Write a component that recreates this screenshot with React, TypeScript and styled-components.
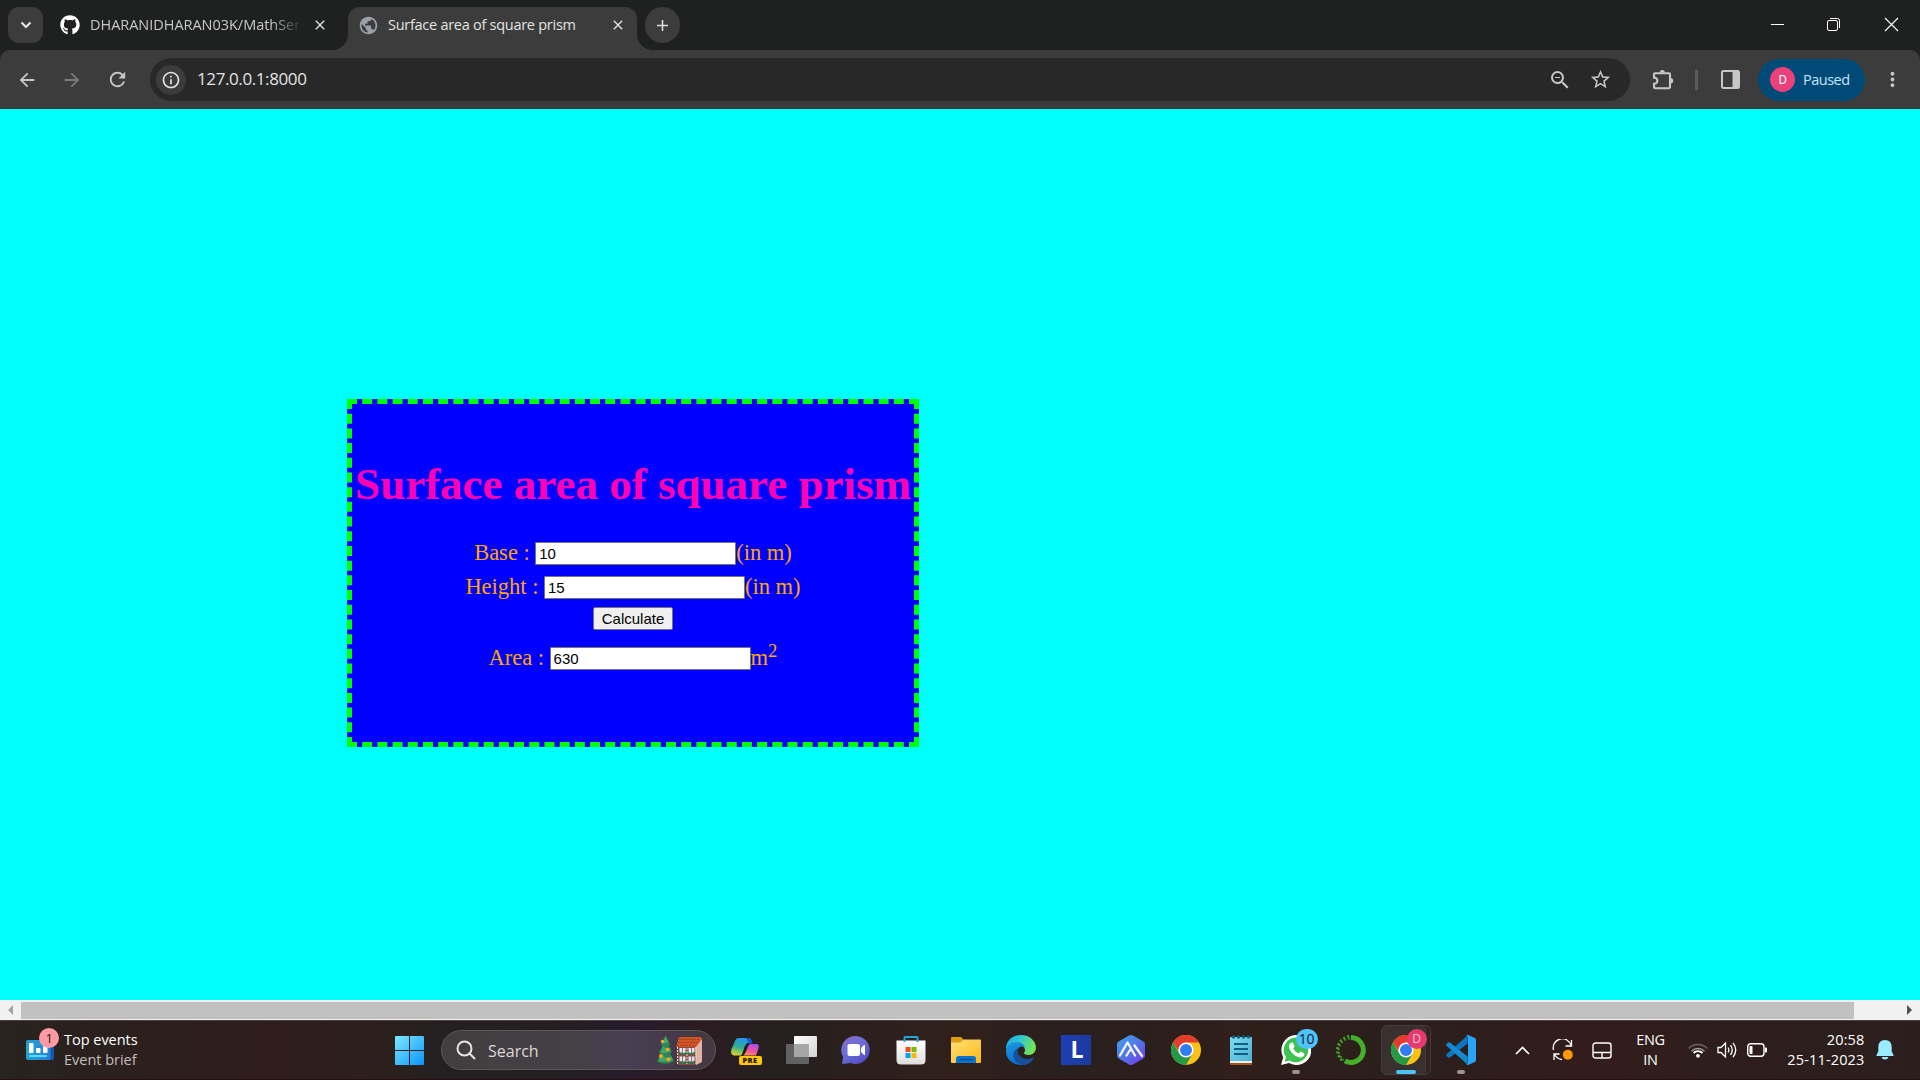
import React from "react";
import styled, { createGlobalStyle } from "styled-components";
import { MdArrowBack, MdArrowForward, MdRefresh, MdInfoOutline, MdStarBorder, MdMoreVert, MdClose, MdAdd, MdZoomOut, MdPublic } from "react-icons/md";
import { FaGithub } from "react-icons/fa";

const ui = `"Open Sans", "Noto Sans", sans-serif`;

const Global = createGlobalStyle`
  html, body { margin: 0; padding: 0; overflow: hidden; }
  * { box-sizing: border-box; }
`;

const Screen = styled.div`
  width: 1920px;
  height: 1080px;
  display: flex;
  flex-direction: column;
  overflow: hidden;
  background: #202222;
  font-family: ${ui};
`;

/* ---------- browser chrome ---------- */

const TabStrip = styled.div`
  height: 50px;
  flex: none;
  display: flex;
  background: #1f2121;
  padding: 7px 0 0 8px;
`;

const RoundButton = styled.div<{ $radius: number }>`
  width: 35px;
  height: 36px;
  border-radius: ${(p) => p.$radius}px;
  background: #3c3c3c;
  color: #dedede;
  display: flex;
  align-items: center;
  justify-content: center;
`;

const Tab = styled.div<{ $active?: boolean }>`
  position: relative;
  display: flex;
  align-items: center;
  height: 43px;
  padding-bottom: 7px;
  width: ${(p) => (p.$active ? 289 : 288)}px;
  padding-left: ${(p) => (p.$active ? 10 : 0)}px;
  padding-right: ${(p) => (p.$active ? 11 : 20)}px;
  margin-left: ${(p) => (p.$active ? 0 : 17)}px;
  border-radius: 12px 12px 0 0;
  background: ${(p) => (p.$active ? "#3c3c3c" : "transparent")};
  color: ${(p) => (p.$active ? "#e3e3e3" : "#c7c7c7")};
  ${(p) =>
    p.$active &&
    `
  &::before, &::after {
    content: "";
    position: absolute;
    bottom: 0;
    width: 15px;
    height: 15px;
  }
  &::before { left: -15px; background: radial-gradient(circle at 0 0, transparent 14.5px, #3c3c3c 15px); }
  &::after { right: -15px; background: radial-gradient(circle at 100% 0, transparent 14.5px, #3c3c3c 15px); }
  `}
`;

const TabTitle = styled.div<{ $gap: number; $spacing: number; $fade?: boolean }>`
  margin-left: ${(p) => p.$gap}px;
  font-size: 14.5px;
  line-height: 22px;
  letter-spacing: ${(p) => p.$spacing}px;
  white-space: nowrap;
  ${(p) => p.$fade && "mask-image: linear-gradient(90deg, #000 86%, rgba(0, 0, 0, 0.1) 100%);"}
`;

const TabClose = styled.div`
  display: flex;
  margin-left: auto;
  color: #e3e3e3;
`;

const NewTab = styled(RoundButton)`
  margin-left: 8px;
`;

const WindowControls = styled.div`
  margin-left: auto;
  margin-top: 10px;
  margin-right: 21px;
  display: flex;
  gap: 42px;
  svg { display: block; }
`;

const Toolbar = styled.div`
  height: 59px;
  flex: none;
  display: flex;
  align-items: center;
  background: #3c3c3c;
  border-radius: 10px 10px 0 0;
  color: #c7c7c7;
`;

const NavButtons = styled.div`
  width: 150px;
  padding-left: 16px;
  display: flex;
  align-items: center;
  gap: 23px;
  svg { display: block; }
`;

const Muted = styled.span`
  color: #7b7b7b;
  display: flex;
`;

const Omnibox = styled.div`
  width: 1480px;
  height: 43px;
  border-radius: 22px;
  background: #282828;
  display: flex;
  align-items: center;
  padding: 0 18px 0 6px;
`;

const InfoBadge = styled.div`
  width: 30px;
  height: 30px;
  border-radius: 50%;
  background: #3c3c3c;
  color: #e3e3e3;
  display: flex;
  align-items: center;
  justify-content: center;
`;

const Address = styled.div`
  margin-left: 11px;
  flex: 1;
  font-size: 17px;
  line-height: 22px;
  padding-bottom: 1px;
  letter-spacing: -0.4px;
  color: #e3e3e3;
`;

const OmniIcons = styled.div`
  display: flex;
  gap: 17px;
`;

const ToolIcons = styled.div`
  display: flex;
  align-items: center;
  padding-left: 22px;
  flex: 1;
`;

const Divider = styled.div`
  width: 3px;
  height: 20px;
  background: #5c5c5c;
  margin: 0 23px 0 21px;
`;

const ProfilePill = styled.div`
  width: 107px;
  height: 42px;
  border-radius: 21px;
  background: #004a77;
  color: #c2e7ff;
  display: flex;
  align-items: center;
  padding: 0 0 1px 12px;
  gap: 8px;
  margin-left: 18px;
  margin-right: 16px;
  font-size: 14.5px;
  letter-spacing: -0.5px;
`;

const Avatar = styled.div`
  width: 25px;
  height: 25px;
  border-radius: 50%;
  background: #ec407a;
  color: #fff;
  font: 13px/25px Roboto, sans-serif;
  text-align: center;
`;

/* ---------- page ---------- */

const Page = styled.main`
  height: 891px;
  flex: none;
  background: #00ffff;
  padding: 290px 0 0 347px;
`;

const Box = styled.section`
  width: 572px;
  height: 348px;
  border: 5px dashed #00ff00;
  background: #0000ff;
  display: flex;
  flex-direction: column;
  align-items: center;
  font-family: "Liberation Serif", "Times New Roman", serif;
  font-size: 22.5px;
  color: orange;
  white-space: nowrap;
`;

const Heading = styled.h1`
  margin: 53px 0 0;
  height: 54px;
  line-height: 54px;
  font-size: 45px;
  color: #ff00b4;
`;

const Row = styled.div<{ $top: number }>`
  height: 28px;
  line-height: 28px;
  margin-top: ${(p) => p.$top}px;
  display: flex;
  align-items: center;
`;

const Label = styled.label`
  margin-right: 5.5px;
`;

const Field = styled.input`
  width: 201px;
  height: 23px;
  margin: 1px 0 0;
  padding: 2px 3px;
  border: 1px solid #767676;
  border-radius: 1px;
  background: #fff;
  color: #000;
  font: 15px/17px "Liberation Sans", Arial, sans-serif;
  outline: none;
`;

const Power = styled.sup`
  font-size: 18.75px;
  line-height: 0;
  vertical-align: super;
`;

const Submit = styled.button`
  width: 80px;
  height: 23px;
  margin: 6px 0 0;
  padding: 0;
  border: 1px solid #767676;
  border-radius: 2px;
  background: #efefef;
  color: #000;
  font: 15px/19px "Liberation Sans", Arial, sans-serif;
`;

const Scrollbar = styled.div`
  height: 20px;
  flex: none;
  background: #f1f1f1;
  display: flex;
  align-items: center;
  padding: 0 8px;
`;

const Thumb = styled.div`
  width: 1833px;
  height: 17px;
  background: #c1c1c1;
  margin: 1px 53px 0 8px;
`;

/* ---------- taskbar ---------- */

const Taskbar = styled.footer`
  height: 60px;
  flex: none;
  display: flex;
  align-items: center;
  border-top: 1px solid #49403f;
  border-bottom: 1px solid #261015;
  background: linear-gradient(90deg, #28231f 0, #2b201d 130px, #301e1c 270px, #2c201d 380px, #242021 450px, #251f22 560px, #281b2c 630px, #2b1c22 700px, #25201f 770px, #2b201d 860px, #31201a 950px, #29201f 1060px, #2b1f1c 1150px, #301f1b 1230px, #2a1f1c 1400px, #331c1c 1600px, #2e1e1c 1700px, #2b1f1e 1920px);
  color: #fff;
`;

const Widgets = styled.div`
  width: 381.5px;
  display: flex;
  align-items: center;
  padding-left: 26px;
`;

const Badged = styled.div`
  position: relative;
  display: flex;
  width: 28px;
`;

const Badge = styled.div<{ $bg: string; $x: number; $y: number; $w?: number; $color?: string; $size?: number }>`
  position: absolute;
  left: ${(p) => p.$x}px;
  top: ${(p) => p.$y}px;
  width: ${(p) => p.$w ?? 20}px;
  height: 20px;
  border-radius: 10px;
  background: ${(p) => p.$bg};
  color: ${(p) => p.$color ?? "#1c1c1c"};
  font-size: ${(p) => p.$size ?? 13}px;
  line-height: 20px;
  text-align: center;
  letter-spacing: -0.3px;
`;

const WidgetText = styled.div`
  margin-left: 10px;
  font-size: 14.5px;
  line-height: 20px;
  letter-spacing: -0.02px;
`;

const Soft = styled.div`
  color: #c4bfbd;
`;

const Cell = styled.div`
  position: relative;
  width: 55px;
  height: 50px;
  display: flex;
  align-items: center;
  justify-content: center;
  flex: none;
  svg { display: block; }
`;

const ActivePlate = styled.div<{ $back?: boolean }>`
  position: absolute;
  left: ${(p) => (p.$back ? 9 : 2)}px;
  top: 0;
  width: ${(p) => (p.$back ? 43 : 45)}px;
  height: 50px;
  border: 1px solid #473c3a;
  border-radius: 6px;
  background: ${(p) => (p.$back ? "#2e2522" : "#393130")};
`;

const Layer = styled.div`
  position: relative;
`;

const Indicator = styled.div<{ $active?: boolean }>`
  position: absolute;
  bottom: 1px;
  left: ${(p) => (p.$active ? 17 : 23)}px;
  width: ${(p) => (p.$active ? 20 : 8)}px;
  height: 4px;
  border-radius: 2px;
  background: ${(p) => (p.$active ? "#4cc2ff" : "#9c9492")};
`;

const Search = styled.div`
  width: 275px;
  height: 40px;
  margin: 0 2.5px 0 4.5px;
  border-radius: 20px;
  border: 1px solid #5c5758;
  background: linear-gradient(90deg, #423e3f, #454046 50%, #483f52 68%, #46394a 85%, #443a40);
  display: flex;
  align-items: center;
  padding: 0 12px 0 14px;
  flex: none;
`;

const SearchLabel = styled.span`
  margin-left: 12px;
  padding-top: 1px;
  flex: 1;
  font-size: 16px;
  letter-spacing: 0;
  color: #dcd9da;
`;

const LApp = styled.div`
  width: 30px;
  height: 30px;
  background: linear-gradient(100deg, #1d3fb4, #1c3a9e);
  color: #fff;
  font: bold 23px/28px "Open Sans", sans-serif;
  text-align: center;
  text-indent: 2px;
`;

const Pre = styled.div`
  position: absolute;
  left: 20px;
  top: 31px;
  width: 23px;
  height: 9px;
  border-radius: 2px;
  background: #ffc60a;
  color: #1b1200;
  font: 800 7.5px/9px "Open Sans", sans-serif;
  text-align: center;
  letter-spacing: 0.4px;
`;

const Tray = styled.div`
  flex: 1;
  display: flex;
  align-items: center;
  padding-left: 26.5px;
  svg { display: block; flex: none; }
`;

const Cycle = styled.svg`
  margin-left: 21.5px;
`;

const Touchpad = styled.svg`
  margin-left: 18px;
`;

const Language = styled.div`
  width: 34px;
  margin-left: 22px;
  text-align: center;
  font-size: 14.5px;
  line-height: 20px;
  letter-spacing: -0.3px;
`;

const Status = styled.div`
  display: flex;
  align-items: center;
  margin-left: 20px;
  gap: 9px;
`;

const Clock = styled.div`
  width: 92px;
  margin-left: 6px;
  margin-right: 11px;
  text-align: right;
  font-size: 14.5px;
  line-height: 20px;
  letter-spacing: 0.15px;
  white-space: nowrap;
`;

const Puzzle = () => (
  <svg width="22" height="22" viewBox="0 0 22 22" fill="none">
    <path d="M4 4.200H17a1 1 0 0 1 1 1V18a1.200 1.200 0 0 1-1.200 1.200H3.200A1.200 1.200 0 0 1 2 18v-3.200c2 0 3.400-1.200 3.400-3.100S4 8.600 2 8.600V5.200a1 1 0 0 1 1-1z" stroke="#c7c7c7" strokeWidth="2.100" />
    <path d="M7.700 3.500a2.600 2.600 0 0 1 5.200 0zM18.500 9a2.700 2.700 0 0 1 0 5.400z" fill="#c7c7c7" />
  </svg>
);

const ChromeLogo = () => (
  <svg width="30" height="30" viewBox="0 0 30 30">
    <circle cx="15" cy="15" r="15" fill="#fbc116" />
    <path d="M2 7.500A15 15 0 0 1 28 7.500H15L9 18z" fill="#e33b2e" />
    <path d="M2 7.500A15 15 0 0 0 15 30l6.500-11.200H8.500z" fill="#269947" />
    <circle cx="15" cy="15" r="7.600" fill="#fff" />
    <circle cx="15" cy="15" r="6" fill="#2f7df1" />
  </svg>
);

const Windows = () => (
  <svg width="29" height="29" viewBox="0 0 29 29">
    <defs>
      <linearGradient id="win" x1="0" y1="0" x2="1" y2="1"><stop stopColor="#7eeaff" /><stop offset="1" stopColor="#0a94fb" /></linearGradient>
    </defs>
    <path d="M1 0h13v14H0V1a1 1 0 0 1 1-1zM15 0h13a1 1 0 0 1 1 1v13H15zM0 15h14v14H1a1 1 0 0 1-1-1zM15 15h14v13a1 1 0 0 1-1 1H15z" fill="url(#win)" />
  </svg>
);

const Holiday = () => (
  <svg width="46" height="30" viewBox="0 0 46 30">
    <path d="M8.500 1l5 9-2 .5 3.500 7-2 .7 4 8.300q-8.500 4.500-17 0L4 18.200l-2-.7 3.500-7-2-.5z" fill="#2c8754" />
    <path d="M8.500 1l3 5.500q-3 3-6 1.500zM6 11q3 3 7 1.500L14 16q-6 3-11 2zM3 20q6 4 11.500 1.500L16 25q-8 3-14.500 1z" fill="#45a566" />
    <g fill="#f3a91d"><circle cx="5.500" cy="6.500" r="1.700" /><circle cx="10.500" cy="14.500" r="1.800" /><circle cx="4" cy="21" r="2" /><circle cx="11.500" cy="24.500" r="2" /></g>
    <path d="M21 10h18v20H21z" fill="#8d4b43" />
    <path d="M38 12l6-9 1 2v22l-6 3z" fill="#e2b3a5" />
    <path d="M22 2h22l1 2-6 8H19z" fill="#cf5529" />
    <path d="M22 4.500h20M21 7.500h20M20 10.500h19" stroke="#a93e1f" strokeWidth="1" strokeDasharray="2 1" />
    <path d="M22.500 13h6v5h-6zM31.500 13h6v5h-6zM22.500 21.500h6v5h-6zM31.500 21.500h6v5h-6z" fill="#dbe7f4" />
    <path d="M25.500 13v14M34.500 13v14" stroke="#8d4b43" strokeWidth=".8" />
    <path d="M22 17.500q4 3 8 0 4 3 8 0M22 26.500q4 3 8 0 4 3 8 0" stroke="#2c7a4b" strokeWidth="1.800" fill="none" />
    <path d="M20.500 12v18M30 13v16M39 12v18" stroke="#efd4cc" strokeWidth="1" strokeDasharray="2 1" />
  </svg>
);

const Copilot = () => (
  <svg width="30" height="30" viewBox="0 0 30 30">
    <defs>
      <linearGradient id="cpa" x1=".5" y1="0" x2=".2" y2="1"><stop stopColor="#2397ee" /><stop offset=".5" stopColor="#2eab97" /><stop offset="1" stopColor="#e1d626" /></linearGradient>
      <linearGradient id="cpb" x1=".6" y1="0" x2=".3" y2="1"><stop stopColor="#a64df0" /><stop offset=".6" stopColor="#f3549b" /><stop offset="1" stopColor="#f99257" /></linearGradient>
    </defs>
    <path d="M7 3h11q2 0 3 5h-5l-2 3q-2 8-4 9.500H3q-4-.5-2.500-6.500L4 6q1-3 3-3z" fill="url(#cpa)" />
    <path d="M14.500 3H18q2.500 0 3.500 5.500h-4Q16.500 4 14.500 3z" fill="#1658d4" />
    <path d="M20 9h5.500q3 0 2 4.500L25 20.500H12q2-1 3-4l2.500-6Q18 9 20 9z" fill="url(#cpb)" />
    <path d="M14.500 11.500L11.500 20.500" stroke="#241f20" strokeWidth="1.500" />
  </svg>
);

const TaskView = () => (
  <svg width="31" height="29" viewBox="0 0 31 29">
    <defs><linearGradient id="tv" x1="0" y1="0" x2="1" y2="1"><stop stopColor="#fff" /><stop offset="1" stopColor="#d2d2d2" /></linearGradient></defs>
    <rect x="8" y="0" width="23" height="21" rx="1" fill="url(#tv)" />
    <rect x="0" y="8" width="23" height="20" rx="1" fill="#626262" />
    <path d="M8 8h15v13H8z" fill="#a6a6a6" />
  </svg>
);

const Chat = () => (
  <svg width="30" height="30" viewBox="0 0 30 30">
    <defs><linearGradient id="chat" x1="0" y1="0" x2=".8" y2="1"><stop stopColor="#9168bf" /><stop offset=".45" stopColor="#6d6fd8" /><stop offset="1" stopColor="#514bc2" /></linearGradient></defs>
    <path d="M15 1a14 14 0 1 1-5.500 27L2 29q-1 0-.8-1l1-6A14 14 0 0 1 15 1z" fill="url(#chat)" />
    <rect x="6.500" y="9" width="12.500" height="12" rx="2" fill="#fff" />
    <path d="M20 13l3-3q1-.7 1 .5v9q0 1.200-1 .5l-3-3z" fill="#fff" />
  </svg>
);

const Store = () => (
  <svg width="30" height="30" viewBox="0 0 30 30">
    <defs><linearGradient id="store" x1="0" y1="0" x2="0" y2="1"><stop stopColor="#fff" /><stop offset="1" stopColor="#dedede" /></linearGradient></defs>
    <path d="M.500 5.500h29V25q0 4.500-4.500 4.500H5Q.5 29.500.5 25z" fill="url(#store)" />
    <path d="M8.500 7V2.500q0-.5.500-.5h12q.5 0 .5.5V7" fill="none" stroke="#1da7dd" strokeWidth="2" />
    <path d="M9.500 12h5v5h-5z" fill="#f04f22" /><path d="M15.500 12h5v5h-5z" fill="#7eb900" /><path d="M9.500 18h5v5h-5z" fill="#02a3ee" /><path d="M15.500 18h5v5h-5z" fill="#feb800" />
  </svg>
);

const Folder = () => (
  <svg width="30" height="28" viewBox="0 0 30 28">
    <defs><linearGradient id="fold" x1="0" y1="0" x2="1" y2="1"><stop stopColor="#ffe07a" /><stop offset="1" stopColor="#fdb913" /></linearGradient></defs>
    <path d="M0 2q0-1 1-1h9l3 3v6H0z" fill="#e09b12" />
    <path d="M0 6.500h9l4-3h16q1 0 1 1V26q0 1-1 1H1q-1 0-1-1z" fill="url(#fold)" />
    <path d="M5 27v-4.500Q5 20 7.500 20h15q2.500 0 2.500 2.500V27z" fill="#0c74d0" />
    <path d="M8.500 23.500h13" stroke="#064a8f" strokeWidth="1.500" />
  </svg>
);

const Edge = () => (
  <svg width="30" height="30" viewBox="0 0 30 30">
    <defs>
      <linearGradient id="ea" x1="0" y1="0" x2="1" y2=".3"><stop stopColor="#1ba7ea" /><stop offset=".5" stopColor="#31c8d0" /><stop offset="1" stopColor="#71e356" /></linearGradient>
      <linearGradient id="eb" x1="0" y1="0" x2=".5" y2="1"><stop stopColor="#1a9be5" /><stop offset="1" stopColor="#0a69cb" /></linearGradient>
    </defs>
    <path d="M0 14C0 5 7 0 15 0c9 0 15 6.500 15 12.500 0 5-4 7.500-7.500 7.500-3 0-4.500-1-4.500-2 0-.7 1-1.200 1-3 0-2.500-3-5.500-7.500-5.500C6 9.500 0 14 0 14z" fill="url(#ea)" />
    <path d="M0 15c1-5 5-8 10.500-8C16 7 19 11 19 13c-1.500-2-5-2-7 1-2.500 4-.5 10 5 12 4 1.500 8 0 9.500-1C24 28.500 20 30 15 30 6 30-1 23 0 15z" fill="url(#eb)" />
    <path d="M12 13c-4 2-5.500 6-4 10 1.200 4 5 6.500 8 7 5 0 9-2.500 11.500-6.500.6-1-.2-1.300-1-.8C22 25 17 24 14 21c-2.500-2.500-3-5.500-2-8z" fill="#174f9b" />
  </svg>
);

const HexApp = () => (
  <svg width="28" height="30" viewBox="0 0 28 30">
    <defs><linearGradient id="hex" x1="0" y1="0" x2=".9" y2="1"><stop stopColor="#41a5ed" /><stop offset=".5" stopColor="#5079e6" /><stop offset="1" stopColor="#7339ee" /></linearGradient></defs>
    <path d="M14 0q1 0 2 .6l10 5.700q2 1.200 2 3v11.400q0 1.800-2 3l-10 5.700q-2 1.100-4 0L2 23.700q-2-1.200-2-3V9.300q0-1.800 2-3L12 .6Q13 0 14 0z" fill="url(#hex)" />
    <path d="M3 20.500l7.500-13 7.500 13M9.500 20.500L14 13.500M17.500 10.500l7.500 10.500" stroke="#f3f4ff" strokeWidth="2.300" fill="none" strokeLinecap="round" strokeLinejoin="round" />
  </svg>
);

const Notepad = () => (
  <svg width="22" height="30" viewBox="0 0 22 30">
    <defs><linearGradient id="note" x1="0" y1="0" x2="1" y2="1"><stop stopColor="#7fdcf0" /><stop offset="1" stopColor="#49b1d3" /></linearGradient></defs>
    <path d="M0 25h22v4q0 1-1 1H1q-1 0-1-1z" fill="#a65214" />
    <path d="M0 24h22v4H0z" fill="#eee" />
    <path d="M0 3q0-1 1-1h20q1 0 1 1v23H0z" fill="url(#note)" />
    <path d="M4 9h14M4 14h14M4 19h14" stroke="#0f5f80" strokeWidth="1.800" />
    <g fill="#12607a"><circle cx="3.500" cy="2" r="1.700" /><circle cx="8.500" cy="2" r="1.700" /><circle cx="13.500" cy="2" r="1.700" /><circle cx="18.500" cy="2" r="1.700" /></g>
  </svg>
);

const WhatsApp = () => (
  <svg width="30" height="30" viewBox="0 0 30 30">
    <path d="M15 0a15 15 0 1 1-7 28L0 30l2.200-7.800A15 15 0 0 1 15 0z" fill="#fff" />
    <path d="M15 2.600a12.300 12.300 0 1 1-6.300 22.900L3.700 26.800 5 22A12.300 12.300 0 0 1 15 2.600z" fill="#3cc351" />
    <path d="M10.500 7.500l1.500.2 1.600 3.800-1.400 2c1.200 2.300 3 4 5.400 5l2-2 3.600 1.800c.5 3-2 4.200-4 4.200C14 22 8 16 8 11.500c0-2 1.200-3.500 2.500-4z" fill="#fff" />
  </svg>
);

const Ring = () => (
  <svg width="30" height="30" viewBox="0 0 30 30" fill="none">
    <path d="M15 2.600a12.400 12.400 0 1 1-6 23.300" stroke="#43b02a" strokeWidth="5" />
    <path d="M14 3.500A11.700 11.700 0 0 0 8 25" stroke="#3a9a28" strokeWidth="2" strokeDasharray="2 2" />
    <path d="M13 1.200A14 14 0 0 0 6.500 26" stroke="#43b02a" strokeWidth="2.300" strokeDasharray="2 2.200" />
  </svg>
);

const VsCode = () => (
  <svg width="30" height="30" viewBox="0 0 30 30">
    <path d="M22 0l-.5 8.500L4 22.500q-1 .7-1.900 0L.5 21q-.8-1 0-1.800z" fill="#0b76bf" />
    <path d="M22 30l-.5-8.500L4 7.500q-1-.7-1.900 0L.5 9q-.8 1 0 1.800z" fill="#1389d1" />
    <path d="M22 0l6.900 3q1.100.6 1.100 1.900v20.200q0 1.300-1.100 1.900L22 30q-1.300.4-2-.5 1.500.5 2-1V2q-.5-2-2-1.500 1-.900 2-.5z" fill="#28a5f2" />
  </svg>
);

const News = () => (
  <svg width="28" height="20" viewBox="0 0 28 20">
    <defs><linearGradient id="news" x1="0" x2="1"><stop stopColor="#24a4d0" /><stop offset="1" stopColor="#2a7ed8" /></linearGradient></defs>
    <rect x="8" width="20" height="20" rx="2" fill="#0d5aa8" />
    <rect width="24.500" height="20" rx="2" fill="url(#news)" />
    <rect x="3" y="3" width="4.500" height="10" rx="1" fill="#fff" /><rect x="10" y="8" width="4.500" height="5" rx="1" fill="#fff" /><rect x="17" y="6" width="4.500" height="7" rx="1" fill="#fff" />
    <rect x="3" y="15" width="18" height="2" rx="1" fill="#55dbff" />
  </svg>
);

const App = () => (
  <Screen>
    <Global />
    <TabStrip>
      <RoundButton $radius={11}>
        <svg width="12" height="8" fill="none" stroke="#e3e3e3" strokeWidth="2.200"><path d="M1.500 1.500L6 6l4.500-4.500" /></svg>
      </RoundButton>
      <Tab>
        <FaGithub size={20} color="#fff" />
        <TabTitle $gap={10} $spacing={-0.03} $fade>DHARANIDHARAN03K/MathSer</TabTitle>
        <TabClose><MdClose size={16} /></TabClose>
      </Tab>
      <Tab $active>
        <MdPublic size={21} color="#9aa0a6" />
        <TabTitle $gap={9} $spacing={-0.27}>Surface area of square prism</TabTitle>
        <TabClose><MdClose size={16} /></TabClose>
      </Tab>
      <NewTab $radius={18}><MdAdd size={19} /></NewTab>
      <WindowControls>
        <svg width="15" height="15"><path d="M1 7.500h13" stroke="#fff" /></svg>
        <svg width="15" height="15" fill="none" stroke="#fff"><rect x=".5" y="3.500" width="10" height="10" rx="1.500" /><path d="M3 1.500h7.500a2 2 0 0 1 2 2V11" /></svg>
        <svg width="15" height="15" fill="none" stroke="#fff" strokeWidth="1.100"><path d="M1 1l13 13M14 1L1 14" /></svg>
      </WindowControls>
    </TabStrip>
    <Toolbar>
      <NavButtons>
        <MdArrowBack size={22} />
        <Muted><MdArrowForward size={22} /></Muted>
        <MdRefresh size={23} />
      </NavButtons>
      <Omnibox>
        <InfoBadge><MdInfoOutline size={20} /></InfoBadge>
        <Address>127.0.0.1:8000</Address>
        <OmniIcons>
          <MdZoomOut size={24} />
          <MdStarBorder size={23} />
        </OmniIcons>
      </Omnibox>
      <ToolIcons>
        <Puzzle />
        <Divider />
        <svg width="19" height="19" viewBox="0 0 19 19"><rect x="1" y="1" width="17" height="17" rx="1.500" fill="none" stroke="#c7c7c7" strokeWidth="2" /><path d="M11.500 1H18v17h-6.500z" fill="#c7c7c7" /></svg>
        <ProfilePill><Avatar>D</Avatar>Paused</ProfilePill>
        <MdMoreVert size={23} />
      </ToolIcons>
    </Toolbar>

    <Page>
      <Box>
        <Heading>Surface area of square prism</Heading>
        <Row $top={28}><Label>Base :</Label><Field defaultValue="10" />(in m)</Row>
        <Row $top={6}><Label>Height :</Label><Field defaultValue="15" />(in m)</Row>
        <Submit>Calculate</Submit>
        <Row $top={14}><Label>Area :</Label><Field defaultValue="630" /><span>m<Power>2</Power></span></Row>
      </Box>
    </Page>
    <Scrollbar>
      <svg width="5" height="10"><path d="M5 0v10L0 5z" fill="#a3a3a3" /></svg>
      <Thumb />
      <svg width="5" height="10"><path d="M0 0v10l5-5z" fill="#505050" /></svg>
    </Scrollbar>

    <Taskbar>
      <Widgets>
        <Badged><News /><Badge $bg="#ff99a4" $x={13} $y={-12}>1</Badge></Badged>
        <WidgetText>Top events<Soft>Event brief</Soft></WidgetText>
      </Widgets>
      <Cell><Windows /></Cell>
      <Search>
        <svg width="20" height="20" fill="none" stroke="#e6e4e5" strokeWidth="2"><circle cx="8.500" cy="8.500" r="7" /><path d="M13.500 13.500l5 5" strokeLinecap="round" /></svg>
        <SearchLabel>Search</SearchLabel>
        <Holiday />
      </Search>
      <Cell><Copilot /><Pre>PRE</Pre></Cell>
      <Cell><TaskView /></Cell>
      <Cell><Chat /></Cell>
      <Cell><Store /></Cell>
      <Cell><Folder /></Cell>
      <Cell><Edge /></Cell>
      <Cell><LApp>L</LApp></Cell>
      <Cell><HexApp /></Cell>
      <Cell><ChromeLogo /></Cell>
      <Cell><Notepad /></Cell>
      <Cell><WhatsApp /><Badge $bg="#4cc2ff" $x={27} $y={4} $w={22} $size={14}>10</Badge><Indicator /></Cell>
      <Cell><Ring /></Cell>
      <Cell>
        <ActivePlate $back /><ActivePlate />
        <Layer><ChromeLogo /></Layer>
        <Badge $bg="#e5396f" $color="#f9c3d4" $x={28} $y={4} $size={12}>D</Badge>
        <Indicator $active />
      </Cell>
      <Cell><VsCode /><Indicator /></Cell>
      <Tray>
        <svg width="15" height="9" fill="none" stroke="#fff" strokeWidth="1.700"><path d="M1 8l6.500-6.500L14 8" /></svg>
        <Cycle width="22" height="22" viewBox="0 0 22 22" fill="none" stroke="#fff" strokeWidth="1.300">
          <path d="M1.500 11A9 9 0 0 1 19 6.500M19.500 1v6h-6M10 20.500a10 10 0 0 1-7.500-5M7.500 15H2v6" />
          <circle cx="15.800" cy="15.800" r="5" fill="#ff9800" stroke="none" />
        </Cycle>
        <Touchpad width="20" height="17" fill="none" stroke="#fff" strokeWidth="1.400"><rect x="1" y="1" width="18" height="15" rx="2.500" /><path d="M1 10.500h18M10 10.500V16" /></Touchpad>
        <Language>ENG<br />IN</Language>
        <Status>
          <svg width="20" height="15" viewBox="0 0 20 15" fill="none" strokeWidth="1.500"><path d="M.7 5.500a13 13 0 0 1 18.600 0" stroke="#6a5f5e" /><path d="M3.500 8.200a9.200 9.200 0 0 1 13 0" stroke="#a29a99" /><path d="M5.500 10a6.500 6.500 0 0 1 9 0" stroke="#fff" strokeWidth="1.800" /><circle cx="10" cy="12.800" r="1.900" fill="#fff" /></svg>
          <svg width="21" height="18" viewBox="0 0 21 18" fill="none" stroke="#fff" strokeWidth="1.300"><path d="M1 6.500h3L8.500 2v14L4 11.500H1zM11 6.500q1.700 2.500 0 5M13.500 4.200q3.500 4.800 0 9.600M16 1.800q5.500 7.200 0 14.400" /></svg>
          <svg width="20" height="14" viewBox="0 0 20 14"><rect x=".7" y=".7" width="16.300" height="12.600" rx="3" fill="none" stroke="#fff" strokeWidth="1.400" /><rect x="2.500" y="3" width="3" height="8" rx=".8" fill="#fff" /><path d="M18 4.500h1q1 0 1 1v3q0 1-1 1h-1z" fill="#fff" /></svg>
        </Status>
        <Clock>20:58<br />25-11-2023</Clock>
        <svg width="18" height="20" viewBox="0 0 18 20" fill="#99ebff"><path d="M9 0q6.500 0 6.700 7v4.500L17.500 15q.5 1-.6 1H1.100Q0 16 .5 15l1.800-3.500V7Q2.500 0 9 0zM5.500 17h7q-.8 2.500-3.500 2.500T5.500 17z" /></svg>
      </Tray>
    </Taskbar>
  </Screen>
);

export default App;
